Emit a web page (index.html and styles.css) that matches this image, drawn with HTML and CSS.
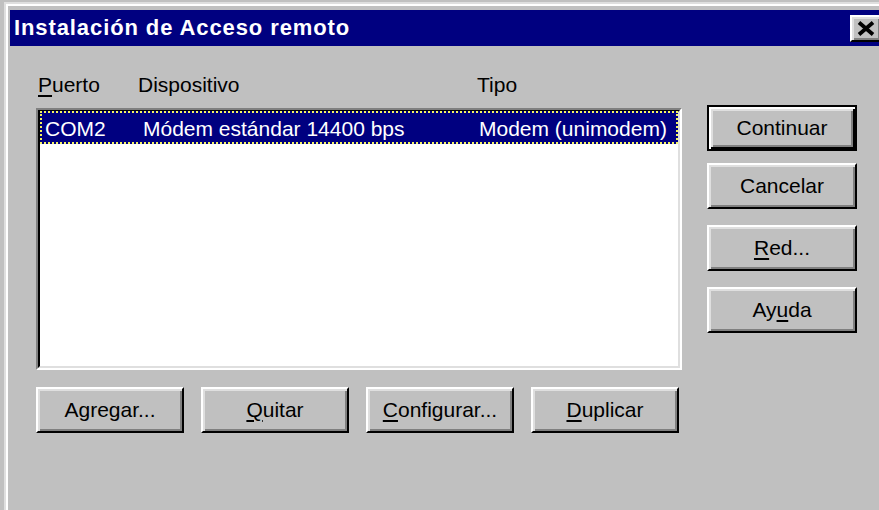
FILE: index.html
```html
<!DOCTYPE html>
<html lang="es">
<head>
<meta charset="utf-8">
<title>Instalación de Acceso remoto</title>
<link rel="stylesheet" href="styles.css">
</head>
<body>
<div class="window">
  <div class="frame">
    <div class="titlebar">
      <span class="title">Instalación de Acceso remoto</span>
      <button class="close" type="button" aria-label="Cerrar">
        <svg width="18" height="15" viewBox="0 0 18 15"><path d="M2 1.5 L16 13.5 M16 1.5 L2 13.5" stroke="#000" stroke-width="3.8" fill="none"/></svg>
      </button>
    </div>
    <div class="body">
      <div class="main">
        <div class="cols">
          <span class="c-port"><u>P</u>uerto</span>
          <span>Dispositivo</span>
          <span>Tipo</span>
        </div>
        <div class="listbox">
          <div class="list">
            <div class="row selected">
              <span>COM2</span>
              <span>Módem estándar 14400 bps</span>
              <span>Modem (unimodem)</span>
            </div>
          </div>
        </div>
        <div class="actions">
          <button class="btn wide" type="button">Agregar...</button>
          <button class="btn wide" type="button"><u>Q</u>uitar</button>
          <button class="btn wide" type="button"><u>C</u>onfigurar...</button>
          <button class="btn wide" type="button"><u>D</u>uplicar</button>
        </div>
      </div>
      <div class="side">
        <button class="btn default" type="button">Continuar</button>
        <button class="btn" type="button">Cancelar</button>
        <button class="btn" type="button"><u>R</u>ed...</button>
        <button class="btn" type="button">Ay<u>u</u>da</button>
      </div>
    </div>
  </div>
</div>
</body>
</html>
```

FILE: styles.css
```css
html, body {
  margin: 0;
  height: 100%;
  overflow: hidden;
}

body {
  background: #c0c0c0;
  font-family: "Liberation Sans", Arial, sans-serif;
  font-size: 21px;
  line-height: 24px;
  color: #000;
}

/* window frame: light outer edge, white inner edge */
.window {
  margin: 2px 0 0 4px;
  border-style: solid;
  border-color: #dfdfdf;
  border-width: 2px 0 0 2px;
  height: 100%;
}

.frame {
  border-style: solid;
  border-color: #ffffff;
  border-width: 2px 0 0 2px;
  padding: 4px 0 0 2px;
  height: 100%;
}

.titlebar {
  width: 876px;
  height: 36px;
  background: #000080;
  display: flex;
  align-items: center;
  justify-content: space-between;
}

.title {
  color: #fff;
  font-size: 22px;
  font-weight: bold;
  letter-spacing: 0.9px;
  padding-left: 4px;
}

.close {
  width: 32px;
  height: 27px;
  margin: 1px 4px 0 0;
  padding: 0;
  background: #c0c0c0;
  border: 2px solid;
  border-color: #fff #000 #000 #fff;
  box-shadow: inset 2px 2px #dfdfdf, inset -2px -2px #808080;
  display: flex;
  align-items: center;
  justify-content: center;
}

.body {
  display: flex;
  align-items: flex-start;
  gap: 25px;
  padding-left: 26px;
}

.main {
  width: 646px;
  padding-top: 27px;
}

.cols {
  display: grid;
  grid-template-columns: 102px 339px auto;
  margin-bottom: 11px;
}

.c-port {
  padding-left: 2px;
}

u {
  text-decoration-thickness: 2px;
  text-underline-offset: 3px;
}

/* sunken list box */
.listbox {
  height: 262px;
  box-sizing: border-box;
  border: 2px solid;
  border-color: #808080 #fff #fff #808080;
}

.list {
  height: 100%;
  box-sizing: border-box;
  border: 2px solid;
  border-color: #000 #dfdfdf #dfdfdf #000;
  background: #fff;
}

.row {
  display: grid;
  grid-template-columns: 98px 336px auto;
  padding: 4px 0 1px 3px;
  margin-top: -1px;
  border: 2px dotted transparent;
}

.row.selected {
  background: #000080;
  color: #fff;
  border-color: #f4f460;
}

.actions {
  display: flex;
  gap: 17px;
  margin-top: 17px;
}

.side {
  display: flex;
  flex-direction: column;
  gap: 16px;
  padding-top: 59px;
}

/* raised push button */
.btn {
  width: 150px;
  height: 46px;
  box-sizing: border-box;
  padding: 0;
  background: #c0c0c0;
  border: 2px solid;
  border-color: #fff #000 #000 #fff;
  box-shadow: inset 2px 2px #dfdfdf, inset -2px -2px #808080;
  font: inherit;
  color: #000;
  display: flex;
  align-items: center;
  justify-content: center;
}

.btn.wide {
  width: 148px;
}

.btn.default {
  border-color: #000;
  box-shadow: inset 2px 2px #fff, inset -2px -2px #000, inset 4px 4px #dfdfdf, inset -4px -4px #808080;
  margin-bottom: -4px;
}
```
